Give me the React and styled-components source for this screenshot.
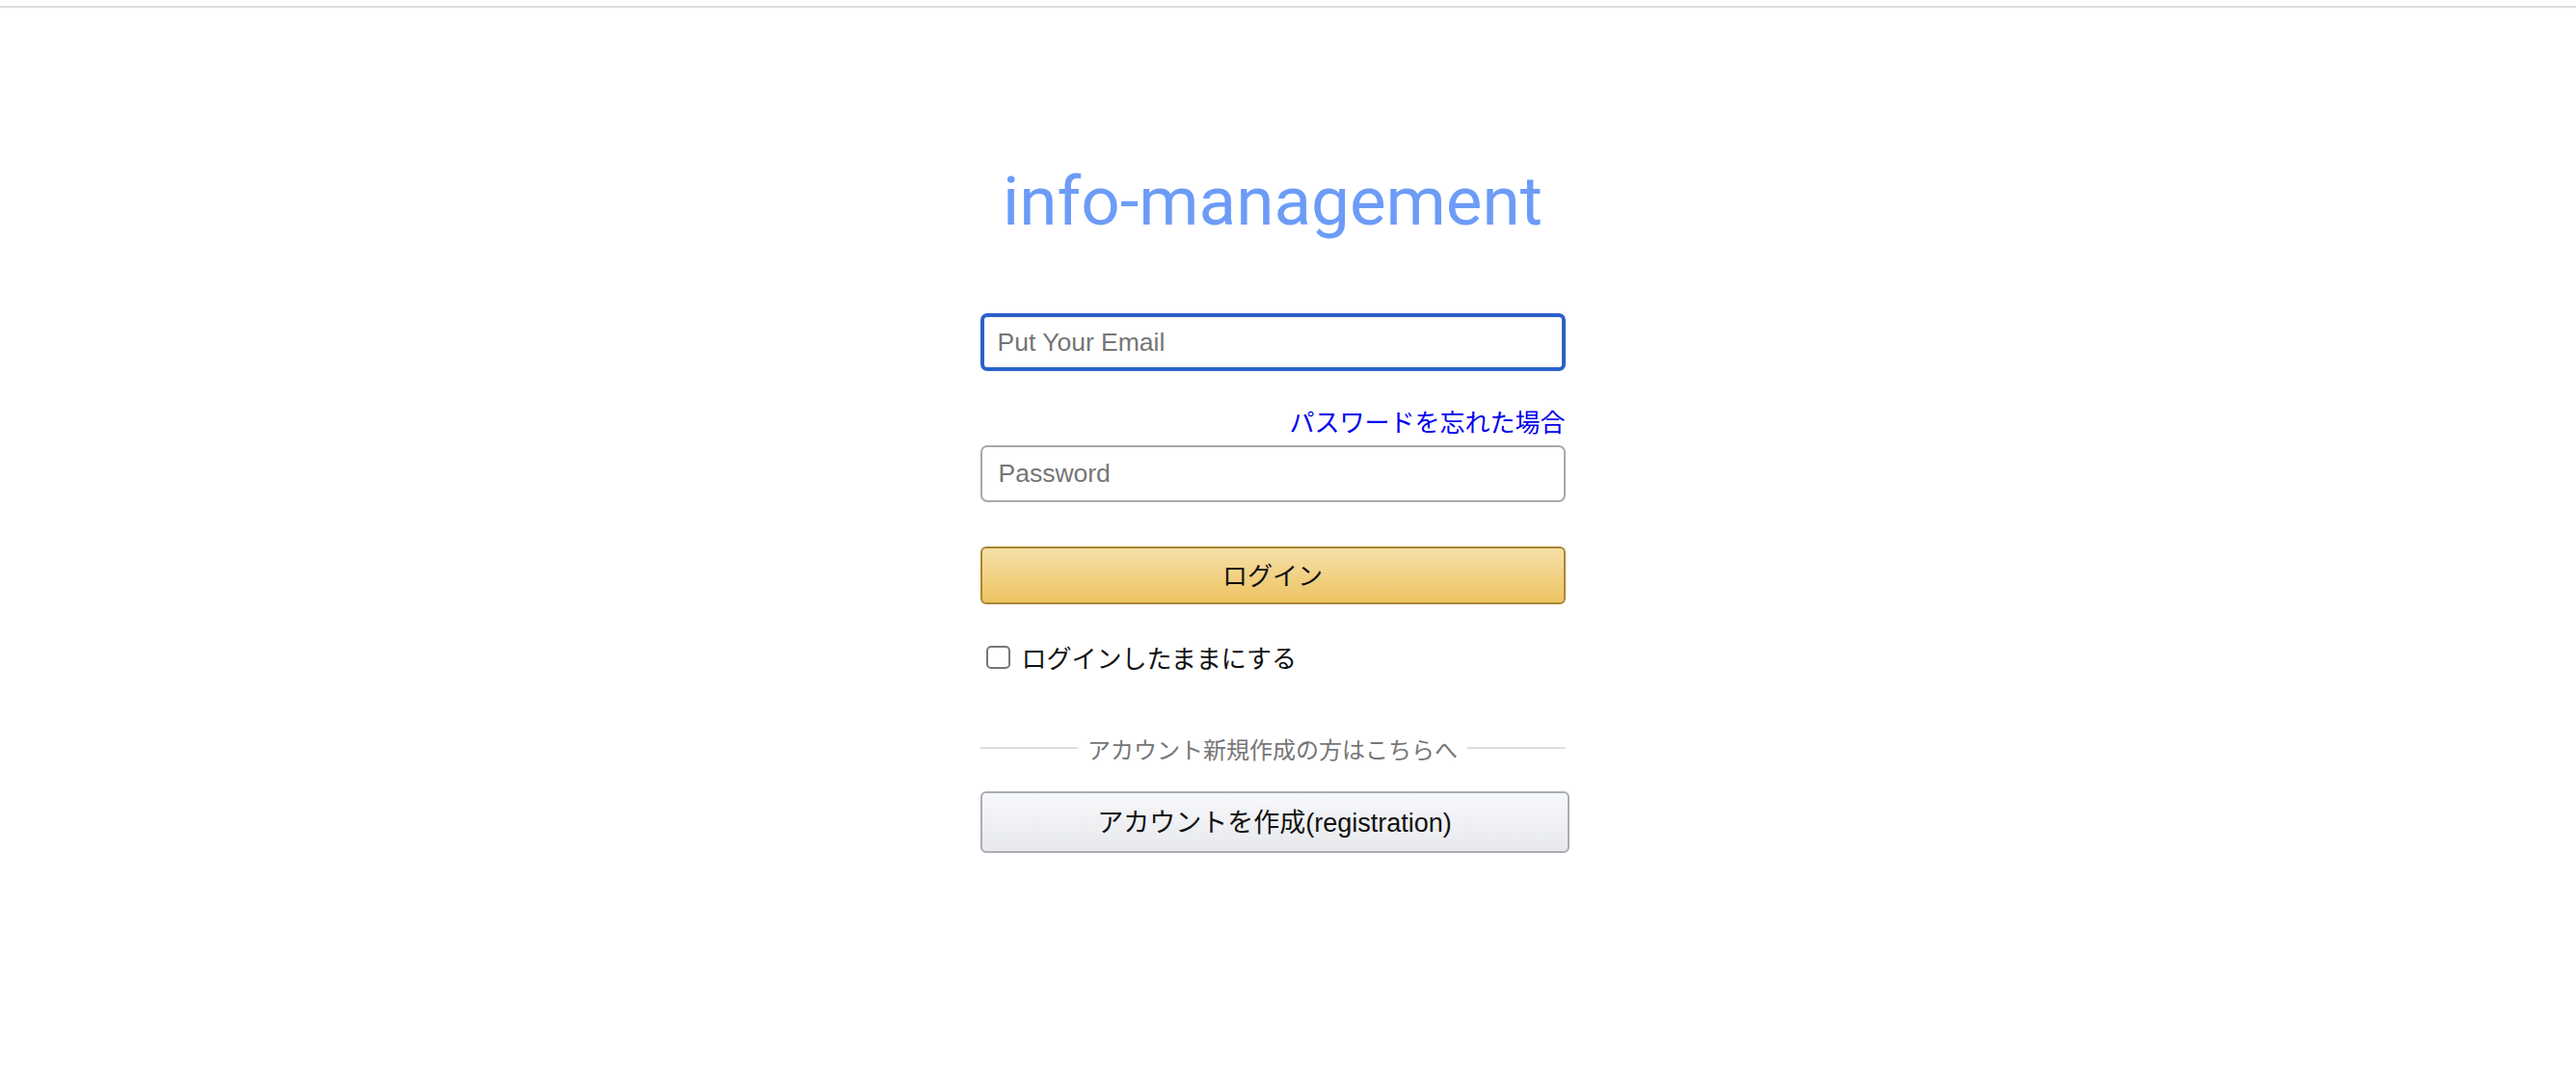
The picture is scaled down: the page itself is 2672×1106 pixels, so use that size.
import styled, { createGlobalStyle } from 'styled-components';

const GlobalStyle = createGlobalStyle`
  body {
    margin: 0;
    background: #ffffff;
    font-family: 'Liberation Sans', 'Noto Sans CJK JP', sans-serif;
    color: #111111;
  }
`;

function App() {
  return (
    <>
      <GlobalStyle />
      <TopRule />
      <Main>
        <Title>info-management</Title>

        <Form onSubmit={(e) => e.preventDefault()}>
          <TextInput
            type="email"
            placeholder="Put Your Email"
            $focused
            autoFocus
          />

          <ForgotRow>
            <ForgotLink href="#">パスワードを忘れた場合</ForgotLink>
          </ForgotRow>

          <TextInput type="password" placeholder="Password" />

          <Button type="submit" $variant="primary">
            ログイン
          </Button>

          <KeepRow>
            <Check type="checkbox" id="keep" />
            <KeepLabel htmlFor="keep">ログインしたままにする</KeepLabel>
          </KeepRow>

          <Divider>
            <span>アカウント新規作成の方はこちらへ</span>
          </Divider>

          <Button type="button" $variant="secondary" $wide>
            アカウントを作成(registration)
          </Button>
        </Form>
      </Main>
    </>
  );
}

const TopRule = styled.div`
  height: 6px;
  border-bottom: 2px solid #dcdce0;
`;

const Main = styled.main`
  display: flex;
  flex-direction: column;
  align-items: center;
  padding-right: 32px;
`;

const Title = styled.h1`
  margin: 160px 0 0;
  font-family: Roboto, 'Liberation Sans', sans-serif;
  font-size: 71px;
  font-weight: 400;
  line-height: 82px;
  color: #6c9cf7;
`;

const Form = styled.form`
  width: 607px;
  margin-top: 75px;
  display: flex;
  flex-direction: column;
`;

const TextInput = styled.input`
  box-sizing: border-box;
  width: 100%;
  height: ${({ $focused }) => ($focused ? '60px' : '59px')};
  margin: 0;
  padding: 0 0 0 ${({ $focused }) => ($focused ? '14px' : '17px')};
  border: ${({ $focused }) =>
    $focused ? '4px solid #2a62c9' : '2px solid #a9a9a9'};
  border-radius: 7px;
  font-family: 'Liberation Sans', sans-serif;
  font-size: 26.5px;
  color: #111;
  caret-color: #000;
  background: #fff;
  outline: none;

  &::placeholder {
    color: #757575;
  }
`;

const ForgotRow = styled.div`
  display: flex;
  justify-content: flex-end;
  margin: 36px 0 9px;
  line-height: 32px;
`;

const ForgotLink = styled.a`
  font-family: 'Noto Sans CJK JP', sans-serif;
  font-size: 26px;
  color: #0000ee;
  text-decoration: none;
`;

const Button = styled.button`
  box-sizing: border-box;
  width: ${({ $wide }) => ($wide ? 'calc(100% + 4px)' : '100%')};
  height: ${({ $wide }) => ($wide ? '64px' : '60px')};
  margin-top: ${({ $variant }) => ($variant === 'primary' ? '46px' : '29px')};
  padding: 0 0 3px;
  border-radius: 6px;
  border: 2px solid;
  font-family: 'Liberation Sans', 'Noto Sans CJK JP', sans-serif;
  font-size: ${({ $wide }) => ($wide ? '27px' : '26px')};
  color: #111;
  cursor: pointer;
  background: ${({ $variant }) =>
    $variant === 'primary'
      ? 'linear-gradient(to bottom, #f6dfa8, #edc462)'
      : 'linear-gradient(to bottom, #f7f8fa, #e7e9ec)'};
  border-color: ${({ $variant }) =>
    $variant === 'primary' ? '#a88734' : '#a9adb4'};
`;

const KeepRow = styled.div`
  display: flex;
  align-items: center;
  gap: 12px;
  height: 32px;
  margin-top: 39px;
  padding-left: 6px;
`;

const Check = styled.input`
  appearance: none;
  box-sizing: border-box;
  width: 25px;
  height: 24px;
  margin: 0;
  border: 2px solid #767676;
  border-radius: 5px;
  background: #fff;
`;

const KeepLabel = styled.label`
  font-family: 'Noto Sans CJK JP', sans-serif;
  font-size: 26px;
  line-height: 32px;
  color: #111;
`;

const Divider = styled.div`
  display: flex;
  align-items: center;
  gap: 10px;
  margin-top: 62px;
  height: 32px;
  font-family: 'Noto Sans CJK JP', sans-serif;
  font-size: 24px;
  color: #767676;

  &::before,
  &::after {
    content: '';
    flex: 1;
    height: 2px;
    background: #dedede;
  }
`;

export default App;
